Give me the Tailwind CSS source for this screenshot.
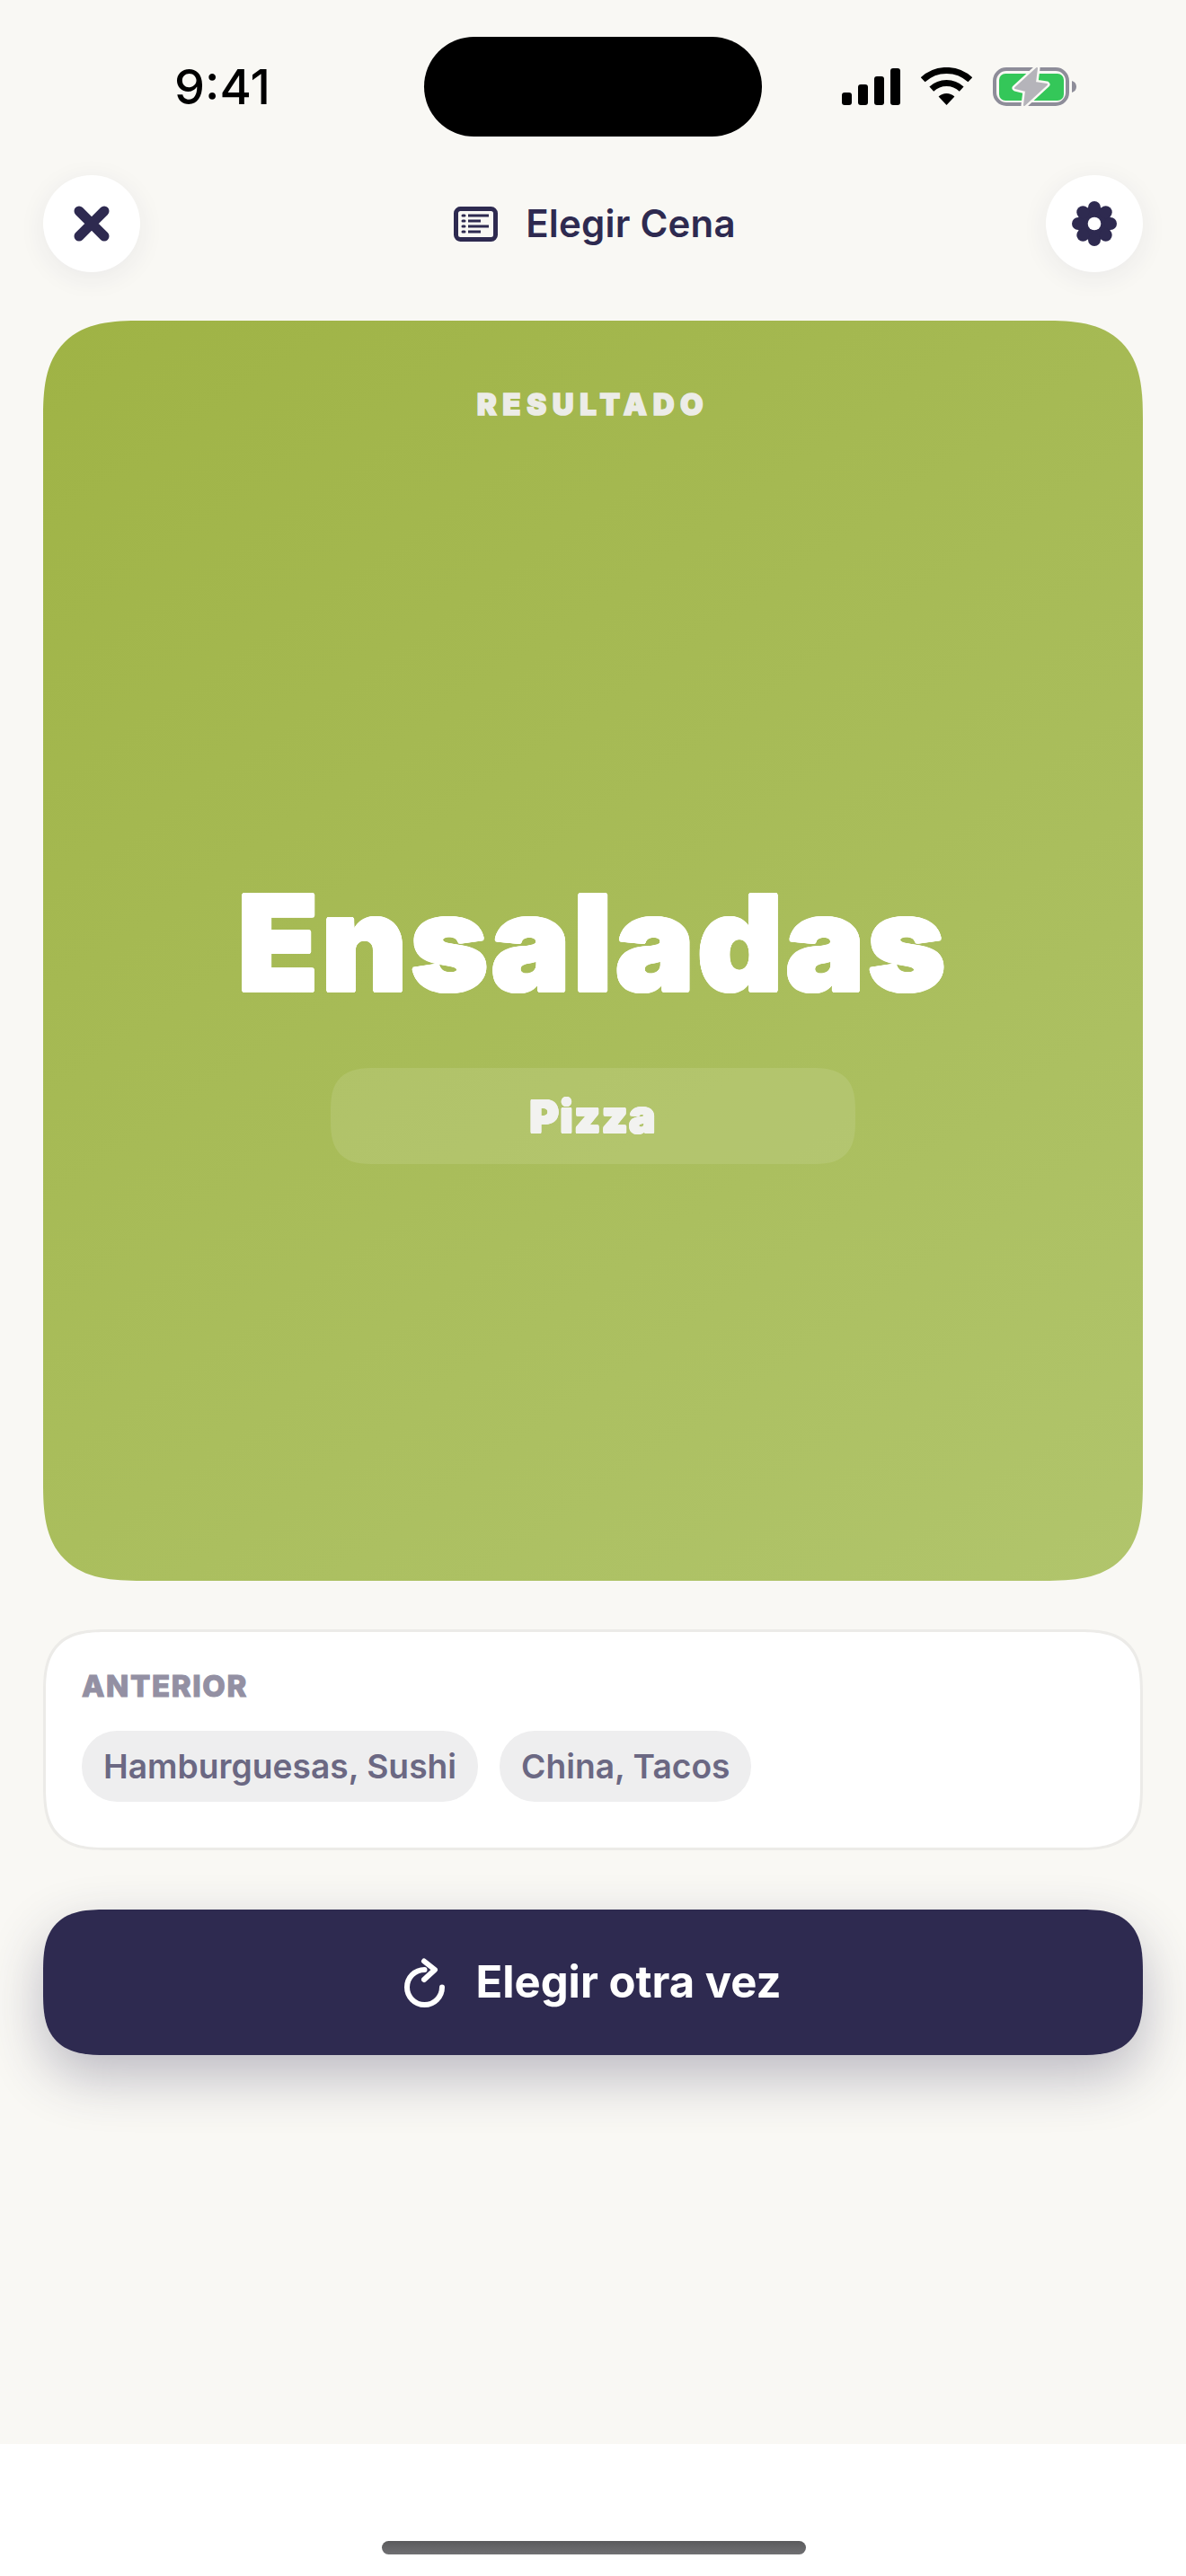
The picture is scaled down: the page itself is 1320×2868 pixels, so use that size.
<!doctype html>
<html lang="es">
<head>
<meta charset="utf-8">
<script src="https://cdn.jsdelivr.net/npm/@tailwindcss/browser@4"></script>
</head>
<body class="m-0">
<div class="relative flex h-[2868px] w-[1320px] flex-col overflow-hidden bg-[#f9f8f4] font-['Inter',sans-serif] text-[#2e2a50]">
  <!-- status bar -->
  <div class="relative flex h-[195px] shrink-0 items-start justify-between">
    <div class="absolute left-[472px] top-[41px] h-[111px] w-[376px] rounded-[56px] bg-black"></div>
    <span class="ml-[194px] mt-[67px] text-[54px] font-medium leading-[60px] text-black">9:41</span>
    <div class="mr-[122px] mt-[74px] flex items-start">
      <svg class="mt-[2px]" width="65" height="41" viewBox="0 0 65 41" fill="#000"><rect x="0" y="27" width="11" height="14" rx="3"/><rect x="18" y="18" width="11" height="23" rx="3"/><rect x="36" y="9" width="11" height="32" rx="3"/><rect x="54" y="0" width="11" height="41" rx="3"/></svg>
      <svg class="ml-[23px] mt-[1px]" width="57" height="42" viewBox="0 0 57 42"><path d="M2.2 13.8A38.5 38.5 0 0 1 54.8 13.8M11.8 24.1A24.5 24.5 0 0 1 45.2 24.1" fill="none" stroke="#000" stroke-width="7"/><path d="M28.5 42L19.6 32.5A13 13 0 0 1 37.4 32.5Z" fill="#000"/></svg>
      <svg class="ml-[23px]" width="93" height="45" viewBox="0 0 93 45"><rect x="2" y="3" width="81" height="39" rx="13" fill="none" stroke="#8e8d99" stroke-width="4"/><rect x="7" y="8" width="72" height="30" rx="7" fill="#34c759"/><path d="M88 16C91 17 93 19 93 22.5C93 26 91 28 88 29Z" fill="#8e8d99"/><path d="M49 2L25 24L37 27L35 43L60 20L47 18Z" fill="#f9f8f4" stroke="#f9f8f4" stroke-width="7" stroke-linejoin="round"/><path d="M49 2L25 24L37 27L35 43L60 20L47 18Z" fill="#b5b4ba" stroke="#b5b4ba" stroke-width="2" stroke-linejoin="round"/></svg>
    </div>
  </div>

  <div class="flex flex-1 flex-col px-12">
    <!-- header -->
    <div class="flex h-[108px] shrink-0 items-center justify-between">
      <button class="flex size-[108px] items-center justify-center rounded-full bg-white shadow-[0_6px_30px_rgba(46,42,80,0.07)]">
        <svg width="40" height="40" viewBox="0 0 40 40" fill="none" stroke="#2e2a50" stroke-width="11" stroke-linecap="round"><path d="M6 6L34 34M34 6L6 34"/></svg>
      </button>
      <div class="ml-[4px] flex items-center gap-[31px]">
        <svg width="49" height="39" viewBox="0 0 49 39" fill="none" stroke="#2e2a50"><rect x="2.5" y="2.5" width="44" height="34" rx="5" stroke-width="5"/><path d="M16 10H39M16 16H30M16 22H39M16 28H30" stroke-width="3"/><path d="M10 10H12M10 16H12M10 22H12M10 28H12" stroke-width="3" stroke-linecap="round"/></svg>
        <span class="text-[42px] font-semibold leading-[50px] tracking-[0.2px]">Elegir Cena</span>
      </div>
      <button class="flex size-[108px] items-center justify-center rounded-full bg-white shadow-[0_6px_30px_rgba(46,42,80,0.07)]">
        <svg width="50" height="50" viewBox="0 0 50 50" fill="#2e2a50"><circle cx="25" cy="25" r="19"/><circle cx="25" cy="7" r="7"/><circle cx="25" cy="43" r="7"/><circle cx="7" cy="25" r="7"/><circle cx="43" cy="25" r="7"/><circle cx="12.3" cy="12.3" r="7"/><circle cx="37.7" cy="12.3" r="7"/><circle cx="12.3" cy="37.7" r="7"/><circle cx="37.7" cy="37.7" r="7"/><circle cx="25" cy="25" r="7.3" fill="#fff"/></svg>
      </button>
    </div>

    <!-- result card -->
    <div class="mt-[54px] flex h-[1403px] shrink-0 flex-col items-center rounded-[110px] [corner-shape:superellipse(1.5)] bg-[linear-gradient(145deg,#9fb345,#b1c56c)] pt-[73px] text-white">
      <span class="text-[33px] font-black leading-[40px] tracking-[0.2em] text-[#ecece7] [-webkit-text-stroke:1.5px_#ecece7]">RESULTADO</span>
      <span class="mt-[490px] text-[147px] font-black leading-[180px] tracking-[3.5px] [text-shadow:2px_0_0_#fff,-2px_0_0_#fff,0_2px_0_#fff,0_-2px_0_#fff,1.4px_1.4px_0_#fff,-1.4px_1.4px_0_#fff,1.4px_-1.4px_0_#fff,-1.4px_-1.4px_0_#fff,1px_1.7px_0_#fff,-1px_1.7px_0_#fff,1px_-1.7px_0_#fff,-1px_-1.7px_0_#fff,1.7px_1px_0_#fff,-1.7px_1px_0_#fff,1.7px_-1px_0_#fff,-1.7px_-1px_0_#fff]">Ensaladas</span>
      <div class="mt-[49px] flex h-[107px] w-[584px] items-center justify-center rounded-[50px] [corner-shape:superellipse(1.5)] bg-white/10">
        <span class="text-[50px] font-black leading-[60px] tracking-[1px] text-[#f2f2f0] [text-shadow:1px_0_0_#f2f2f0,-1px_0_0_#f2f2f0,0_1px_0_#f2f2f0,0_-1px_0_#f2f2f0,0.7px_0.7px_0_#f2f2f0,-0.7px_0.7px_0_#f2f2f0,0.7px_-0.7px_0_#f2f2f0,-0.7px_-0.7px_0_#f2f2f0]">Pizza</span>
      </div>
    </div>

    <!-- previous -->
    <div class="mt-[54px] flex h-[246px] shrink-0 flex-col rounded-[72px] [corner-shape:superellipse(1.5)] border-[3px] border-[#ecebe8] bg-white pl-[40px] pt-[40px]">
      <span class="text-[33px] font-extrabold leading-[40px] tracking-[0.05em] text-[#9390a3] [-webkit-text-stroke:1px_#9390a3]">ANTERIOR</span>
      <div class="mt-[30px] flex gap-[24px]">
        <span class="flex h-[79px] items-center rounded-[39px] bg-[#eeeeef] px-[24px] text-[37.2px] font-semibold text-[#6b6883]">Hamburguesas, Sushi</span>
        <span class="flex h-[79px] items-center rounded-[39px] bg-[#eeeeef] px-[24px] text-[37.2px] font-semibold text-[#6b6883]">China, Tacos</span>
      </div>
    </div>

    <!-- action -->
    <button class="mt-[66px] flex h-[162px] shrink-0 items-center justify-center gap-[34px] rounded-[70px] [corner-shape:superellipse(1.5)] bg-[#2e2a50] text-white shadow-[0_24px_60px_rgba(46,42,80,0.3)]">
      <svg width="45" height="55" viewBox="0 0 45 55" fill="none" stroke="#fff" stroke-width="6" stroke-linecap="round" stroke-linejoin="round"><path d="M42 32.5A19.5 19.5 0 1 1 22.5 13"/><path d="M22 3.5L34 13L22 24"/></svg>
      <span class="text-[49px] font-bold leading-[58px]">Elegir otra vez</span>
    </button>
  </div>

  <!-- home bar -->
  <div class="relative h-[147px] shrink-0 bg-white">
    <div class="absolute left-[425px] top-[108px] h-[15px] w-[472px] rounded-full bg-[linear-gradient(#5a5a5c,#707073)]"></div>
  </div>
</div>
</body>
</html>
